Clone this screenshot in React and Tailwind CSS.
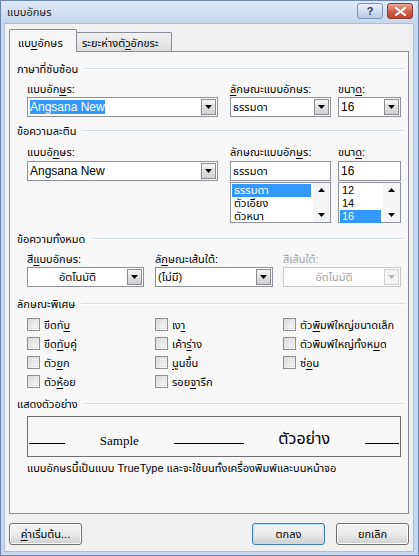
import React from "react"

const U = ({ children }) => <span className="underline underline-offset-[2px]">{children}</span>

const Arrow = ({ up = false, light = false }) => (
  <svg width="7" height="4" viewBox="0 0 7 4" className={up ? "rotate-180" : ""}>
    <path d="M0 0h7L3.5 4z" fill={light ? "#b4b4b4" : "#000"} />
  </svg>
)

const DropButton = ({ disabled = false }) => (
  <div
    className={`mr-[1px] h-[16px] w-[15px] shrink-0 flex items-center justify-center border ${
      disabled ? "border-[#d2d2d2] bg-[#f4f4f4]" : "border-[#8c8c8c] bg-gradient-to-b from-[#f6f6f6] to-[#cfcfcf]"
    }`}
  >
    <Arrow light={disabled} />
  </div>
)

const Combo = ({ children, center = false, disabled = false, noButton = false, className = "" }) => (
  <div
    className={`h-[20px] flex items-center border bg-white ${
      disabled ? "border-[#c9c9c9]" : "border-[#8e9197]"
    } ${className}`}
  >
    <div className={`flex-1 px-[2px] truncate ${center ? "text-center" : ""} ${disabled ? "text-[#a3a3a3]" : ""}`}>
      {children}
    </div>
    {!noButton && <DropButton disabled={disabled} />}
  </div>
)

const ListBox = ({ items, selected }) => (
  <div className="h-[41px] mt-[1px] flex border border-[#8e9197] bg-white">
    <div className="flex-1 pt-[1px] pl-[1px] pr-[2px]">
      {items.map((item) => (
        <div
          key={item}
          className={`h-[13px] leading-[13px] px-[2px] overflow-hidden ${item === selected ? "bg-[#3399ff] text-white" : ""}`}
        >
          {item}
        </div>
      ))}
    </div>
    <div className="w-[17px] flex flex-col justify-between items-center py-[5px] bg-[#f5f5f5]">
      <Arrow up />
      <Arrow />
    </div>
  </div>
)

const GroupLabel = ({ children, className = "" }) => (
  <div className={`h-[14px] leading-[14px] flex items-center pl-[7px] pr-[3px] ${className}`}>
    <span>{children}</span>
    <div className="ml-[6px] flex-1 h-[2px] border-t border-[#d5dfe5] border-b border-b-white" />
  </div>
)

const Check = ({ children }) => (
  <div className="flex items-center gap-[4px] h-[19px]">
    <div className="w-[13px] h-[13px] border border-[#8f8f8f] bg-gradient-to-br from-[#d4d4d4] to-[#ffffff] p-[1px]">
      <div className="w-full h-full border border-[#e3e3e3]" />
    </div>
    <span className="leading-[14px]">{children}</span>
  </div>
)

const Button = ({ children, primary = false }) => (
  <div
    className={`w-[73px] h-[22px] rounded-[3px] border flex items-center justify-center bg-gradient-to-b from-[#f2f2f2] via-[#ebebeb] to-[#cfcfcf] ${
      primary ? "border-[#3c7fb1] shadow-[inset_0_0_0_1px_#b6e3fb]" : "border-[#707070] shadow-[inset_0_0_0_1px_#fcfcfc]"
    }`}
  >
    {children}
  </div>
)

export default function App() {
  return (
    <div className="w-[419px] h-[556px] flex flex-col bg-[#c5d8ef] border border-[#6d87a8] text-[11px] text-black font-[Tahoma,'Liberation_Sans','Noto_Sans_Thai','Noto_Sans','DejaVu_Sans',sans-serif] overflow-hidden">
      {/* title bar */}
      <div className="h-[22px] shrink-0 flex items-center pl-[6px] pr-[5px] bg-gradient-to-b from-[#dde9f7] to-[#c4d7ee]">
        <span className="flex-1 text-[11px] text-[#1a1a1a]">แบบอักษร</span>
        <div className="w-[26px] h-[16px] mt-[-2px] rounded-[3px] border border-[#7f97b5] bg-gradient-to-b from-[#e8f0fa] to-[#b9cde6] flex items-center justify-center text-[11px] font-bold text-[#2e3f55]">
          ?
        </div>
        <div className="ml-[4px] w-[26px] h-[16px] mt-[-2px] rounded-[3px] border border-[#8d3a32] bg-gradient-to-b from-[#e9a99b] via-[#d2614f] to-[#c2412c] flex items-center justify-center">
          <svg width="11" height="9" viewBox="0 0 11 9">
            <path d="M1 1l9 7M10 1L1 8" stroke="#fff" strokeWidth="2.2" strokeLinecap="round" />
          </svg>
        </div>
      </div>

      {/* body */}
      <div className="flex-1 ml-[3px] mr-[4px] mb-[3px] bg-[#f0f0f0] border border-[#a9bdd6] pt-[5px] pl-[4px] pr-[4px] flex flex-col">
        {/* tabs */}
        <div className="flex items-end h-[23px] relative z-10">
          <div className="w-[68px] h-[23px] border border-b-0 border-[#898c95] bg-[#f7f7f7] pl-[8px] pt-[5px] rounded-t-[2px]">
            แบ<U>บ</U>อักษร
          </div>
          <div className="w-[95px] h-[19px] mb-[1px] border border-l-0 border-b-0 border-[#898c95] bg-gradient-to-b from-[#f2f2f2] to-[#dcdcdc] pl-[5px] pt-[2px] rounded-tr-[2px]">
            ระยะห่างตั<U>ว</U>อักขระ
          </div>
        </div>

        {/* panel */}
        <div className="h-[463px] mt-[-1px] border border-[#898c95] bg-[#f7f7f7] flex flex-col">
          <GroupLabel className="mt-[10px]">ภาษาที่ซับซ้อน</GroupLabel>
          <div className="pl-[17px] pr-[7px]">
            <div className="flex mt-[6px]">
              <div className="w-[191px] h-[14px] leading-[14px]">แบบอัก<U>ษ</U>ร:</div>
              <div className="w-[101px] ml-[12px] h-[14px] leading-[14px]"><U>ล</U>ักษณะแบบอักษร:</div>
              <div className="w-[63px] ml-[7px] h-[14px] leading-[14px]">ขนา<U>ด</U>:</div>
            </div>
            <div className="flex mt-[1px]">
              <Combo className="w-[191px]">
                <span className="bg-[#3399ff] text-white text-[12px]">Angsana New</span>
              </Combo>
              <Combo className="w-[101px] ml-[12px]">ธรรมดา</Combo>
              <Combo className="w-[63px] ml-[7px]">
                <span className="text-[12px]">16</span>
              </Combo>
            </div>
          </div>

          <GroupLabel className="mt-[7px]">ข้อความละติน</GroupLabel>
          <div className="pl-[17px] pr-[7px]">
            <div className="flex mt-[7px]">
              <div className="w-[191px] h-[14px] leading-[14px]">แบบอั<U>ก</U>ษร:</div>
              <div className="w-[101px] ml-[12px] h-[14px] leading-[14px]">ลักษณะแบบอัก<U>ษ</U>ร:</div>
              <div className="w-[63px] ml-[7px] h-[14px] leading-[14px]">ขนา<U>ด</U>:</div>
            </div>
            <div className="flex mt-[2px] items-start">
              <Combo className="w-[191px]">
                <span className="text-[12px]">Angsana New</span>
              </Combo>
              <div className="w-[101px] ml-[12px]">
                <Combo noButton>ธรรมดา</Combo>
                <ListBox items={["ธรรมดา", "ตัวเอียง", "ตัวหนา"]} selected="ธรรมดา" />
              </div>
              <div className="w-[63px] ml-[7px]">
                <Combo noButton>
                  <span className="text-[12px]">16</span>
                </Combo>
                <ListBox items={["12", "14", "16"]} selected="16" />
              </div>
            </div>
          </div>

          <GroupLabel className="mt-[9px]">ข้อความทั้งหมด</GroupLabel>
          <div className="pl-[17px] pr-[7px]">
            <div className="flex mt-[6px]">
              <div className="w-[117px] h-[14px] leading-[14px]">สี<U>แ</U>บบอักษร:</div>
              <div className="w-[118px] ml-[11px] h-[14px] leading-[14px]">ลั<U>ก</U>ษณะเส้นใต้:</div>
              <div className="w-[118px] ml-[10px] h-[14px] leading-[14px] text-[#a3a3a3]">สีเส้นใต้:</div>
            </div>
            <div className="flex mt-[1px]">
              <Combo className="w-[117px]" center>อัตโนมัติ</Combo>
              <Combo className="w-[118px] ml-[11px]">(ไม่มี)</Combo>
              <Combo className="w-[118px] ml-[10px]" center disabled>อัตโนมัติ</Combo>
            </div>
          </div>

          <GroupLabel className="mt-[10px]">ลักษณะพิเศษ</GroupLabel>
          <div className="pl-[17px] pr-[7px] mt-[4px] flex">
            <div className="w-[128px]">
              <Check>ขีดทั<U>บ</U></Check>
              <Check>ขีด<U>ทั</U>บคู่</Check>
              <Check>ตัว<U>ย</U>ก</Check>
              <Check>ตัว<U>ห</U>้อย</Check>
            </div>
            <div className="w-[128px]">
              <Check>เง<U>า</U></Check>
              <Check>เค้า<U>ร</U>่าง</Check>
              <Check><U>นู</U>นขึ้น</Check>
              <Check>รอย<U>จ</U>ารึก</Check>
            </div>
            <div className="flex-1">
              <Check>ตัว<U>พิ</U>มพ์ใหญ่ขนาดเล็ก</Check>
              <Check>ตัวพิมพ์ใหญ่ทั้งห<U>ม</U>ด</Check>
              <Check>ซ่<U>อ</U>น</Check>
            </div>
          </div>

          <GroupLabel className="mt-[6px]">แสดงตัวอย่าง</GroupLabel>
          <div className="pl-[17px] pr-[7px]">
            <div className="mt-[5px] h-[41px] border border-[#6e6e6e] bg-[#f7f7f7] flex items-end justify-between px-[1px] pb-[12px]">
              <div className="w-[36px] h-px bg-black" />
              <span className="font-['Liberation_Serif',serif] font-normal text-[13px] leading-none mb-[-3px]">Sample</span>
              <div className="w-[70px] h-px bg-black" />
              <span className="text-[16px] font-normal leading-none mb-[-3px]">ตัวอย่าง</span>
              <div className="w-[34px] h-px bg-black" />
            </div>
            <div className="mt-[4px] h-[14px] leading-[14px]">
              แบบอักษรนี้เป็นแบบ TrueType และจะใช้บนทั้งเครื่องพิมพ์และบนหน้าจอ
            </div>
          </div>
        </div>

        {/* buttons */}
        <div className="flex mt-[9px]">
          <Button><span><U>ค</U>่าเริ่มต้น...</span></Button>
          <div className="flex-1" />
          <Button primary>ตกลง</Button>
          <div className="w-[11px]" />
          <Button>ยกเลิก</Button>
        </div>
      </div>
    </div>
  )
}
